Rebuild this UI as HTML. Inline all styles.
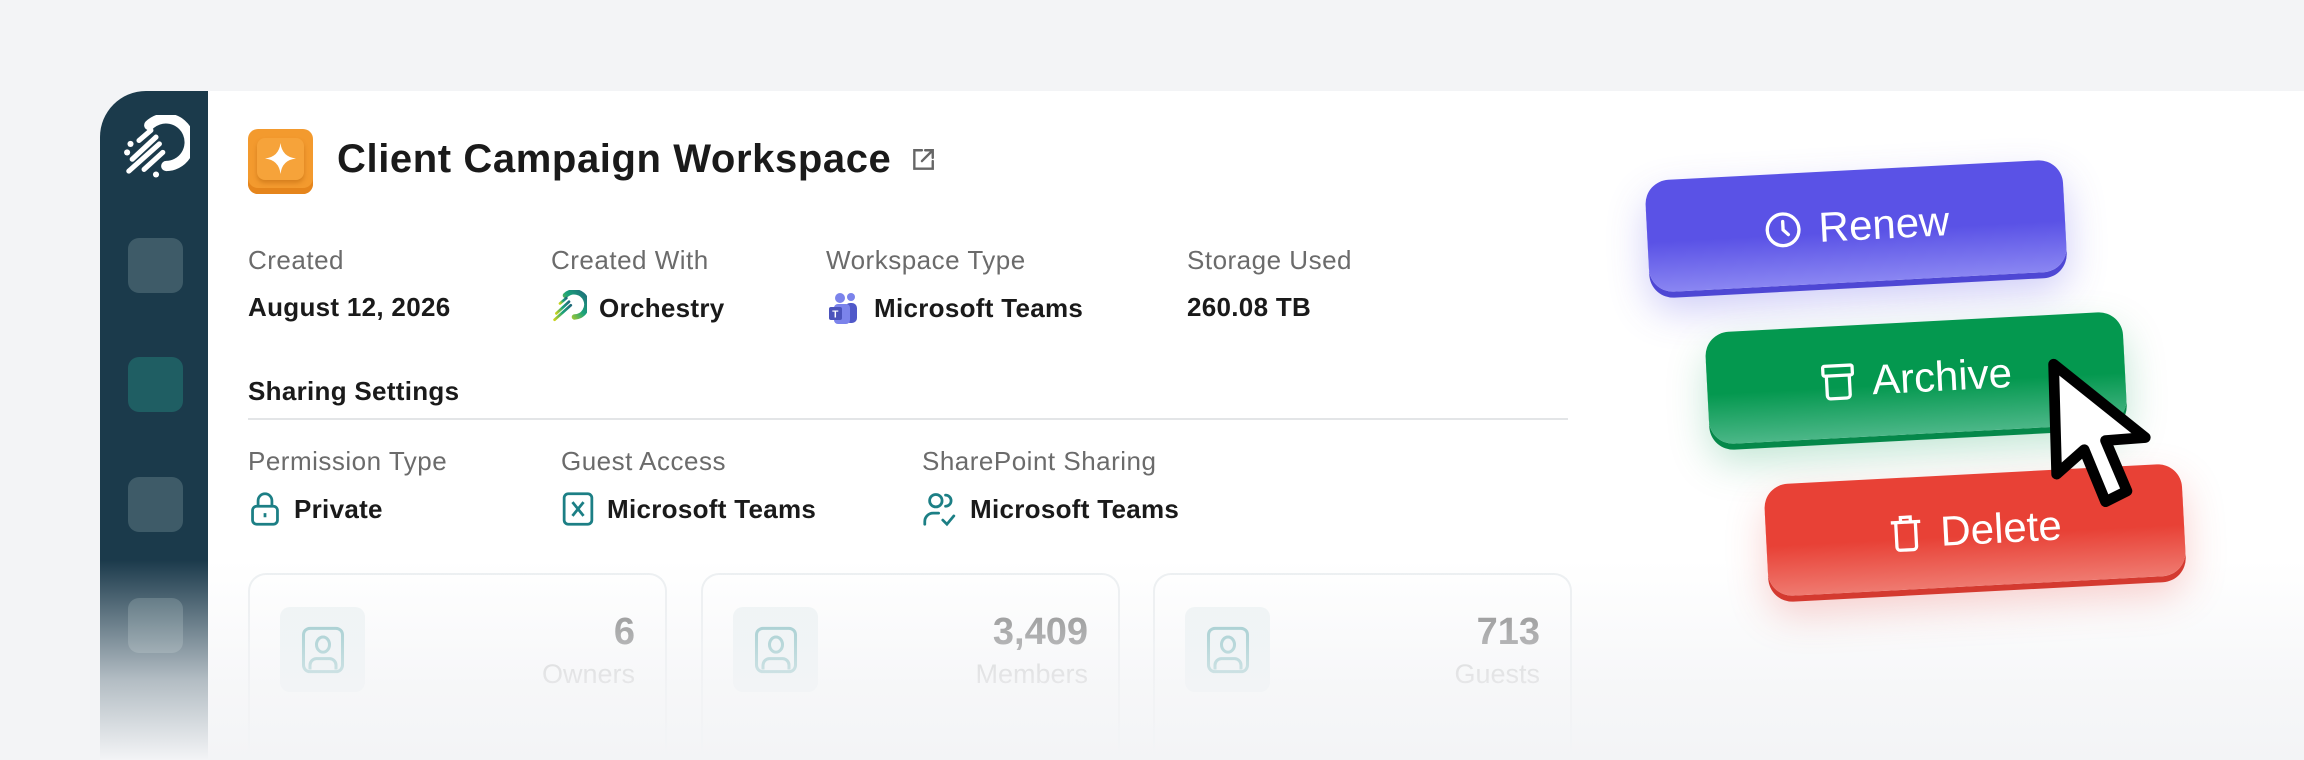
<!DOCTYPE html>
<html style="overflow:hidden;height:760px"><head><meta charset="utf-8"><style>
*{margin:0;padding:0;box-sizing:border-box}
body{width:2304px;height:760px;overflow:hidden;background:#f3f4f6;font-family:"Liberation Sans",sans-serif;position:relative}
.abs{position:absolute}
.side{left:100px;top:91px;width:108px;height:669px;background:#1b3a4b;border-top-left-radius:46px}
.sq{position:absolute;left:28px;width:55px;height:55px;border-radius:11px;background:#3e5b68}
.panel{left:208px;top:91px;width:2096px;height:669px;background:#fff}
.lbl{position:absolute;font-size:26px;color:#6b6b6b;white-space:nowrap;letter-spacing:.5px}
.val{position:absolute;font-size:26px;color:#1a1a1a;font-weight:bold;white-space:nowrap;display:flex;align-items:center;gap:12px;letter-spacing:.3px}
.card{position:absolute;top:573px;width:419px;height:187px;border:2px solid #eceff1;border-bottom:none;border-radius:18px 18px 0 0;background:#fff}
.ib{position:absolute;left:30px;top:32px;width:85px;height:85px;border-radius:10px;background:#eef4f5;display:flex;align-items:center;justify-content:center}
.num{position:absolute;right:30px;top:36px;font-size:38px;font-weight:bold;color:#777}
.cl{position:absolute;right:30px;top:84px;font-size:27px;color:#c4c4c4}
.btn{position:absolute;width:418px;height:112px;border-radius:24px;color:#fff;font-size:42px;display:flex;align-items:center;justify-content:center;gap:16px;transform:rotate(-3deg)}
.fade{left:0;top:560px;width:2304px;height:200px;background:linear-gradient(to bottom,rgba(243,244,246,0),rgba(243,244,246,.7) 60%,#f3f4f6)}
</style></head><body>
<div class="abs side">
  <svg class="abs" style="left:22px;top:24px" width="68" height="68" viewBox="0 0 40 40"><path d="M16 6a14 14 0 1 1 10 24" fill="none" stroke="#fff" stroke-width="6" stroke-linecap="round"/><g stroke="#fff" stroke-width="3" stroke-linecap="round"><line x1="10" y1="15" x2="17" y2="9"/><line x1="6" y1="26" x2="20" y2="13"/><line x1="4" y1="33" x2="22" y2="17"/><line x1="13" y1="32" x2="24" y2="22"/></g><circle cx="5" cy="17" r="1.8" fill="#fff"/><circle cx="3" cy="22" r="1.8" fill="#fff"/><circle cx="20" cy="35" r="1.8" fill="#fff"/><circle cx="26" cy="31" r="1.8" fill="#fff"/></svg>
  <div class="sq" style="top:147px"></div>
  <div class="sq" style="top:266px;background:#1f5e63"></div>
  <div class="sq" style="top:386px"></div>
  <div class="sq" style="top:507px"></div>
</div>
<div class="abs panel"></div>
<div class="abs" style="left:248px;top:129px;width:65px;height:65px;border-radius:10px;background:#f39a2e;box-shadow:inset 0 -6px 0 #e5851c">
  <div class="abs" style="left:9px;top:9px;width:47px;height:42px;border-radius:8px;background:#f6a33a;box-shadow:0 3px 4px rgba(160,80,0,.35)"></div>
  <svg class="abs" style="left:17px;top:14px" width="31" height="31" viewBox="0 0 20 20"><path d="M10 0Q11 9 20 10Q11 11 10 20Q9 11 0 10Q9 9 10 0Z" fill="#fff"/></svg>
</div>
<div class="abs" style="left:337px;top:137px;font-size:40px;font-weight:bold;color:#1a1a1a;letter-spacing:.6px">Client Campaign Workspace</div>
<svg class="abs" style="left:910px;top:147px" width="26" height="26" viewBox="0 0 24 24" fill="none" stroke="#666" stroke-width="2.2" stroke-linecap="round"><path d="M11 3H4v17h17v-7"/><path d="M14 3h7v7M21 3l-10 10"/></svg>

<div class="lbl" style="left:248px;top:245px">Created</div>
<div class="lbl" style="left:551px;top:245px">Created With</div>
<div class="lbl" style="left:826px;top:245px">Workspace Type</div>
<div class="lbl" style="left:1187px;top:245px">Storage Used</div>
<div class="val" style="left:248px;top:292px">August 12, 2026</div>
<div class="val" style="left:551px;top:290px"><svg width="36" height="36" viewBox="0 0 40 40"><defs><linearGradient id="g" x1="0" y1="1" x2="1" y2="0"><stop offset="0" stop-color="#c8d21e"/><stop offset=".5" stop-color="#1aa37a"/><stop offset="1" stop-color="#1f6a7a"/></linearGradient></defs><path d="M16 6a14 14 0 1 1 10 24" fill="none" stroke="url(#g)" stroke-width="6" stroke-linecap="round"/><g stroke="url(#g)" stroke-width="3" stroke-linecap="round"><line x1="10" y1="15" x2="17" y2="9"/><line x1="6" y1="26" x2="20" y2="13"/><line x1="4" y1="33" x2="22" y2="17"/></g></svg>Orchestry</div>
<div class="val" style="left:826px;top:290px"><svg width="36" height="36" viewBox="0 0 36 36"><circle cx="25" cy="7" r="4" fill="#7b83eb"/><circle cx="14" cy="8" r="5" fill="#7b83eb"/><rect x="19" y="13" width="12" height="20" rx="5" fill="#5059c9"/><rect x="8" y="14" width="16" height="20" rx="4" fill="#7b83eb"/><rect x="3" y="17" width="13" height="13" rx="2" fill="#4b53bc"/><text x="9.5" y="27.5" font-size="10" fill="#fff" text-anchor="middle" font-family="Liberation Sans" font-weight="bold">T</text></svg>Microsoft Teams</div>
<div class="val" style="left:1187px;top:292px">260.08 TB</div>

<div class="abs" style="left:248px;top:376px;font-size:26px;font-weight:bold;color:#1a1a1a;letter-spacing:.3px">Sharing Settings</div>
<div class="abs" style="left:248px;top:418px;width:1320px;height:2px;background:#e3e5e7"></div>

<div class="lbl" style="left:248px;top:446px">Permission Type</div>
<div class="lbl" style="left:561px;top:446px">Guest Access</div>
<div class="lbl" style="left:922px;top:446px">SharePoint Sharing</div>
<div class="val" style="left:248px;top:491px"><svg width="34" height="36" viewBox="0 0 24 26" fill="none" stroke="#1c7f85" stroke-width="2"><rect x="3" y="11" width="18" height="13" rx="3"/><path d="M7 11V7a5 5 0 0 1 10 0v4M12 16v3"/></svg>Private</div>
<div class="val" style="left:561px;top:491px"><svg width="34" height="36" viewBox="0 0 24 26" fill="none" stroke="#1c7f85" stroke-width="2"><rect x="2" y="2" width="20" height="22" rx="3"/><path d="M8 8l8 10M16 8l-8 10"/></svg>Microsoft Teams</div>
<div class="val" style="left:922px;top:491px"><svg width="36" height="36" viewBox="0 0 26 26" fill="none" stroke="#1c7f85" stroke-width="2" stroke-linecap="round"><circle cx="10" cy="7" r="4.5"/><path d="M17 3a4 4 0 0 1 0 8M2 24v-2a6 6 0 0 1 6-6h4M15 21l3 3 5-6"/></svg>Microsoft Teams</div>

<div class="card" style="left:248px"><div class="ib"><svg width="52" height="52" viewBox="0 0 24 24" fill="none" stroke="#7fbcbf" stroke-width="1.4"><rect x="3" y="2" width="18" height="20" rx="3"/><ellipse cx="12" cy="9.5" rx="3" ry="3.5"/><path d="M6 21v-2a3 3 0 0 1 3-3h6a3 3 0 0 1 3 3v2"/></svg></div><div class="num">6</div><div class="cl">Owners</div></div>
<div class="card" style="left:701px"><div class="ib"><svg width="52" height="52" viewBox="0 0 24 24" fill="none" stroke="#7fbcbf" stroke-width="1.4"><rect x="3" y="2" width="18" height="20" rx="3"/><ellipse cx="12" cy="9.5" rx="3" ry="3.5"/><path d="M6 21v-2a3 3 0 0 1 3-3h6a3 3 0 0 1 3 3v2"/></svg></div><div class="num">3,409</div><div class="cl">Members</div></div>
<div class="card" style="left:1153px"><div class="ib"><svg width="52" height="52" viewBox="0 0 24 24" fill="none" stroke="#7fbcbf" stroke-width="1.4"><rect x="3" y="2" width="18" height="20" rx="3"/><ellipse cx="12" cy="9.5" rx="3" ry="3.5"/><path d="M6 21v-2a3 3 0 0 1 3-3h6a3 3 0 0 1 3 3v2"/></svg></div><div class="num">713</div><div class="cl">Guests</div></div>

<div class="abs fade"></div>

<div class="btn" style="left:1647px;top:170px;background:linear-gradient(to bottom,#5a52e6 55%,#8a86f2);box-shadow:0 6px 0 #4e47d4,0 18px 40px rgba(90,82,230,.3)"><svg width="40" height="40" viewBox="0 0 24 24" fill="none" stroke="#fff" stroke-width="2" stroke-linecap="round"><circle cx="12" cy="12" r="9.5"/><path d="M12 7v5l3 3"/></svg>Renew</div>
<div class="btn" style="left:1707px;top:322px;background:linear-gradient(to bottom,#04984f 55%,#4cb788);box-shadow:0 6px 0 #05884a,0 18px 40px rgba(4,152,79,.25)"><svg width="36" height="40" viewBox="0 0 22 24" fill="none" stroke="#fff" stroke-width="2"><rect x="2" y="2" width="18" height="6" rx="1"/><path d="M4 8v12a2 2 0 0 0 2 2h10a2 2 0 0 0 2-2V8"/></svg>Archive</div>
<div class="btn" style="left:1766px;top:474px;background:linear-gradient(to bottom,#e84136 55%,#ef7a70);box-shadow:0 6px 0 #d43a30,0 18px 40px rgba(232,65,54,.25)"><svg width="36" height="40" viewBox="0 0 22 24" fill="none" stroke="#fff" stroke-width="2"><path d="M2 5h18M8 5V2h6v3M5 5v15a2 2 0 0 0 2 2h8a2 2 0 0 0 2-2V5"/></svg>Delete</div>
<svg class="abs" style="left:2040px;top:355px" width="125" height="165" viewBox="0 0 80 108"><path d="M8 6L10 78L28 62L42 96L56 89L42 56L68 54Z" fill="#fff" stroke="#000" stroke-width="7" stroke-linejoin="round"/></svg>
</body></html>
